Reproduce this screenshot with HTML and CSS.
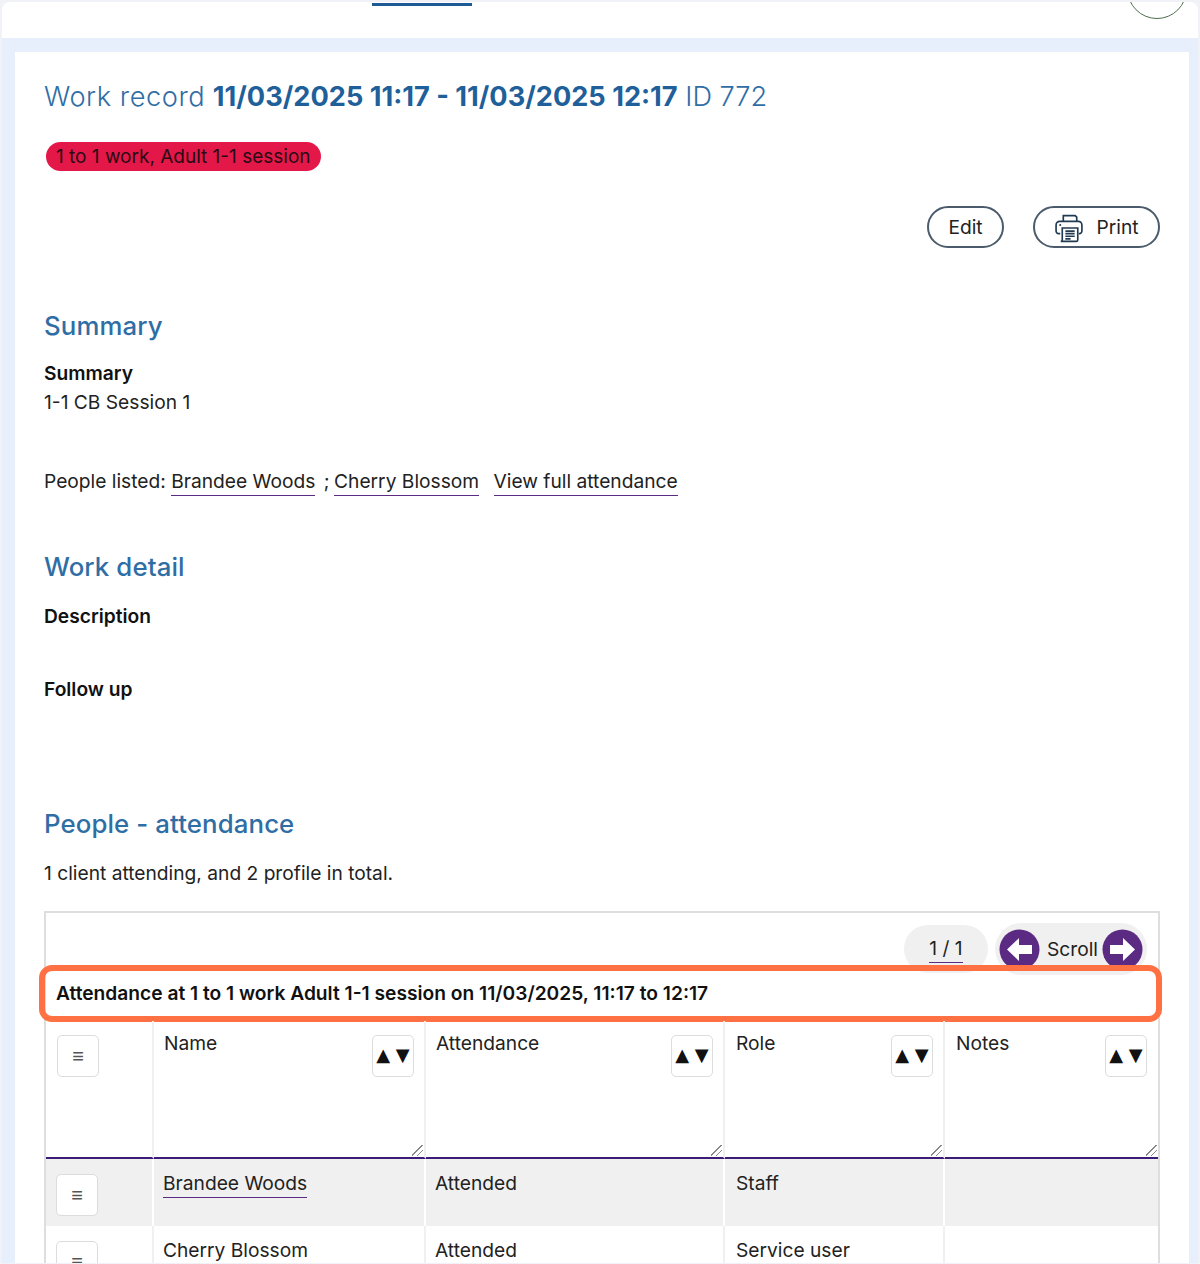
FILE: index.html
```html
<!DOCTYPE html>
<html lang="en">
<head>
    <meta charset="UTF-8">
    <meta name="viewport" content="width=device-width, initial-scale=1.0">
    <title>Work record</title>
    <link rel="stylesheet" href="styles.css">
</head>
<body>

<header class="topbar">
    <span class="tab-active"></span>
    <span class="avatar"></span>
</header>

<div class="page">
<main class="card">
    <h1 class="title"><span class="title-lead">Work record</span> <strong>11/03/2025 11:17 - 11/03/2025 12:17</strong> ID 772</h1>
    <div class="tags"><span class="pill">1 to 1 work, Adult 1-1 session</span></div>

    <div class="actions">
        <a class="btn btn-edit" href="#">Edit</a>
        <a class="btn btn-print" href="#">
            <svg class="print-icon" width="31" height="31" viewBox="0 0 30 30" fill="none" stroke="#1f3a52" stroke-width="1.6">
                <path d="M9 9V3.500h11.500L22 5v4"/>
                <path d="M6 21H4.500A2.500 2.500 0 0 1 2 18.500v-6A3.500 3.500 0 0 1 5.500 9h18a3.500 3.500 0 0 1 3.500 3.500v6a2.500 2.500 0 0 1-2.500 2.500H24"/>
                <path d="M8 15.500h15v11.500a1.500 1.500 0 0 1-1.500 1.500H6.500A1.500 1.500 0 0 0 8 27z"/>
                <path d="M11 18.500h9M11 21h9M11 23.500h9M11 26h5"/>
                <circle cx="6" cy="12.500" r="1" fill="#1f3a52" stroke="none"/>
            </svg>
            Print
        </a>
    </div>

    <h2 class="section-title first">Summary</h2>
    <h3 class="label">Summary</h3>
    <p class="text">1-1 CB Session 1</p>
    <p class="text people">People listed: <a class="link" href="#">Brandee Woods</a> <span class="sep">;</span> <a class="link" href="#">Cherry Blossom</a> <a class="link full" href="#">View full attendance</a></p>

    <h2 class="section-title detail">Work detail</h2>
    <h3 class="label">Description</h3>
    <h3 class="label follow">Follow up</h3>

    <h2 class="section-title attendance">People - attendance</h2>
    <p class="text count">1 client attending, and 2 profile in total.</p>

    <section class="table-box">
        <div class="table-tools">
            <span class="pager"><a class="link" href="#">1 / 1</a></span>
            <span class="scroller">
                <svg class="arrow" width="41" height="41" viewBox="0 0 41 41"><circle cx="20.500" cy="20.500" r="20" fill="#5b2a82"/><path d="M8 20.500 20 9v7h13v9H20v7z" fill="#fff"/></svg>
                <span class="scroll-text">Scroll</span>
                <svg class="arrow" width="41" height="41" viewBox="0 0 41 41"><circle cx="20.500" cy="20.500" r="20" fill="#5b2a82"/><path d="M33 20.500 21 9v7H8v9h13v7z" fill="#fff"/></svg>
            </span>
        </div>
        <div class="caption">Attendance at 1 to 1 work Adult 1-1 session on 11/03/2025, 11:17 to 12:17</div>
        <div class="highlight"></div>

        <table class="people-table">
            <colgroup>
                <col class="col-menu"><col class="col-name"><col class="col-att"><col class="col-role"><col class="col-notes">
            </colgroup>
            <thead>
                <tr>
                    <th><button class="sq menu">&#8801;</button></th>
                    <th>Name<button class="sq sort">&#9650; &#9660;</button><i class="grip"></i></th>
                    <th>Attendance<button class="sq sort">&#9650; &#9660;</button><i class="grip"></i></th>
                    <th class="shifted">Role<button class="sq sort">&#9650; &#9660;</button><i class="grip"></i></th>
                    <th class="shifted">Notes<button class="sq sort">&#9650; &#9660;</button><i class="grip"></i></th>
                </tr>
            </thead>
            <tbody>
                <tr class="alt">
                    <td><button class="sq menu">&#8801;</button></td>
                    <td><a class="link" href="#">Brandee Woods</a></td>
                    <td>Attended</td>
                    <td class="shifted">Staff</td>
                    <td></td>
                </tr>
                <tr>
                    <td><button class="sq menu">&#8801;</button></td>
                    <td><a class="link" href="#">Cherry Blossom</a></td>
                    <td>Attended</td>
                    <td class="shifted">Service user</td>
                    <td></td>
                </tr>
            </tbody>
        </table>
    </section>
</main>
</div>

</body>
</html>
```

FILE: styles.css
```css
html, body {
    height: 1264px;
    overflow: hidden;
}
body {
    margin: 0;
    padding: 2px 0 0;
    box-sizing: border-box;
    background: #f0f2f8;
    font-family: 'Inter', 'Liberation Sans', sans-serif;
    font-size: 19.2px;
    color: #222;
}
.topbar {
    display: flex;
    justify-content: space-between;
    height: 36px;
    margin: 0 2px;
    padding: 0 11px 0 370px;
    background: white;
    border-radius: 8px 8px 0 0;
    overflow: hidden;
}
.tab-active {
    width: 100px;
    height: 3px;
    margin-top: 1px;
    background: #1d5a96;
}
.avatar {
    width: 60px;
    height: 60px;
    margin-top: -43px;
    box-sizing: border-box;
    border: 1.5px solid #4f6f4f;
    border-radius: 50%;
}
.page {
    height: 1225px;
    margin: 0 2px;
    padding: 14px 9px 0 13px;
    box-sizing: border-box;
    background: #e8effc;
    overflow: hidden;
}
.card {
    height: 100%;
    padding: 0 29px;
    background: white;
}
.title {
    margin: 0;
    padding-top: 27px;
    font-size: 27.2px;
    font-weight: 300;
    line-height: 36px;
    color: #2f6ea5;
}
.title-lead {
    letter-spacing: 0.55px;
}
.title strong {
    font-weight: 700;
    color: #1f5f9a;
}
.tags {
    display: flex;
    margin-top: 27px;
    padding-left: 2px;
}
.pill {
    height: 29px;
    padding: 0 10px;
    line-height: 29px;
    font-size: 19px;
    background: #e31849;
    color: #2a0a14;
    border-radius: 15px;
}
.actions {
    display: flex;
    justify-content: flex-end;
    gap: 29px;
    margin-top: 35px;
}
.btn {
    display: flex;
    align-items: center;
    justify-content: center;
    height: 42px;
    box-sizing: border-box;
    border: 2px solid #4b5b6b;
    border-radius: 21px;
    color: #222;
    text-decoration: none;
}
.btn-edit {
    width: 77px;
}
.btn-print {
    width: 127px;
    gap: 11px;
}
.section-title {
    margin: 0;
    font-size: 25.8px;
    font-weight: 500;
    line-height: 32px;
    letter-spacing: 0.1px;
    color: #2f6ea5;
}
.section-title.first {
    margin-top: 62px;
}
.section-title.detail {
    margin-top: 58px;
}
.section-title.attendance {
    margin-top: 107px;
}
.label {
    margin: 19px 0 0;
    font-size: 19.2px;
    font-weight: 600;
    line-height: 24px;
    color: #111;
}
.section-title.detail + .label {
    margin-top: 21px;
}
.label.follow {
    margin-top: 49px;
}
.text {
    margin: 5px 0 0;
    line-height: 24px;
}
.people {
    margin-top: 55px;
}
.count {
    margin-top: 21px;
}
.link {
    color: #222;
    text-decoration: none;
    border-bottom: 1px solid #5b2a82;
    padding-bottom: 2px;
}
.full {
    margin-left: 9px;
}
.sep {
    margin: 0 -1px 0 3px;
}
.table-box {
    position: relative;
    height: 400px;
    margin-top: 26px;
    border: 2px solid #dedede;
}
.table-tools {
    display: flex;
    justify-content: flex-end;
    gap: 7px;
    height: 43px;
    padding: 10px 11px 0 0;
    box-sizing: border-box;
}
.pager {
    display: flex;
    align-items: center;
    justify-content: center;
    width: 84px;
    height: 48px;
    margin-top: 2px;
    background: #f0f0f0;
    border-radius: 24px;
}
.scroller {
    display: flex;
    align-items: center;
    gap: 5px;
    height: 52px;
    padding: 0 4px;
    background: #f0f0f0;
    border-radius: 26px;
}
.scroll-text {
    margin: 0 -1px 0 2px;
}
.arrow {
    flex: none;
}
.caption {
    position: relative;
    height: 65px;
    padding: 26px 0 0 10px;
    box-sizing: border-box;
    line-height: 22px;
    font-weight: 600;
    color: #111;
}
.highlight {
    position: absolute;
    top: 52px;
    left: -7px;
    right: -4px;
    height: 57px;
    box-sizing: border-box;
    border: 6px solid #ff7043;
    border-radius: 13px;
}
.people-table {
    width: 1112px;
    table-layout: fixed;
    border-collapse: separate;
    border-spacing: 0;
}
.col-menu { width: 108px; }
.col-name { width: 272px; }
.col-att { width: 299px; }
.col-role { width: 220px; }
.people-table th {
    position: relative;
    height: 138px;
    padding: 10px 0 0 10px;
    box-sizing: border-box;
    vertical-align: top;
    text-align: left;
    font-weight: 400;
    border-right: 2px solid #f0f0f0;
    border-bottom: 2px solid #3a1c78;
}
.people-table th:last-child,
.people-table td:last-child {
    border-right: none;
}
.people-table td {
    height: 67px;
    padding: 12px 0 0 9px;
    box-sizing: border-box;
    vertical-align: top;
    border-right: 2px solid #f0f0f0;
}
.people-table .shifted {
    padding-left: 11px;
}
.alt td {
    background: #f0f0f0;
    border-right-color: white;
}
.sq {
    width: 42px;
    height: 42px;
    padding: 0;
    background: white;
    border: 1px solid #dcdcdc;
    border-radius: 5px;
    font-family: 'DejaVu Sans', sans-serif;
    color: #111;
}
.menu {
    font-size: 20px;
    font-weight: 300;
    color: #555;
}
th .menu {
    margin: 4px 0 0 1px;
}
td .menu {
    margin: 3px 0 0 1px;
}
.sort {
    position: absolute;
    top: 14px;
    right: 10px;
    padding-bottom: 4px;
    font-size: 18px;
    white-space: nowrap;
}
th:last-child .sort {
    right: 11px;
}
.grip {
    position: absolute;
    right: 1px;
    bottom: 1px;
    width: 11px;
    height: 11px;
    background: linear-gradient(135deg, transparent 45%, #888 45%, #888 52%, transparent 52%, transparent 70%, #888 70%, #888 77%, transparent 77%);
}
```
